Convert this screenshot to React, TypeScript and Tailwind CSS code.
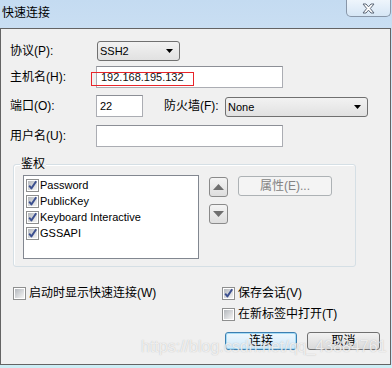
import React from "react";

const FONT = "font-['Liberation_Sans','Noto_Sans_CJK_SC',sans-serif]";

function Check({ checked }: { checked: boolean }) {
  return (
    <svg width="13" height="13" viewBox="0 0 13 13" className="shrink-0">
      <defs>
        <linearGradient id="cbg" x1="0" y1="0" x2="1" y2="1">
          <stop offset="0" stopColor="#b4b8bd" />
          <stop offset="1" stopColor="#f5f5f5" />
        </linearGradient>
      </defs>
      <rect x="0.5" y="0.5" width="12" height="12" fill="#ffffff" stroke="#8e8f8f" />
      <rect x="2" y="2" width="9" height="9" fill="url(#cbg)" />
      {checked && (
        <path d="M3.2 6.6 L5.4 9.4 L10.2 2.2" fill="none" stroke="#3b4f8f" strokeWidth="1.9" strokeLinejoin="round" />
      )}
    </svg>
  );
}

function Combo({ value, w }: { value: string; w: string }) {
  return (
    <div
      className={`${w} h-[20px] border border-[#707070] rounded-[3px] bg-gradient-to-b from-[#f2f2f2] to-[#e1e1e1] flex items-center pl-[2px] pr-[6px] justify-between`}
    >
      <span className="text-[11px] text-black leading-none">{value}</span>
      <svg width="7" height="4" viewBox="0 0 7 4">
        <path d="M0 0 L7 0 L3.5 4 Z" fill="#000" />
      </svg>
    </div>
  );
}

function Input({ w, children }: { w: string; children?: React.ReactNode }) {
  return (
    <div
      className={`${w} h-[22px] border border-[#abadb3] border-t-[#8c8f96] bg-white flex items-center pl-[3px] relative`}
    >
      {children}
    </div>
  );
}

export default function App() {
  return (
    <div
      className={`${FONT} w-[392px] h-[368px] overflow-hidden relative bg-gradient-to-b from-[#c4dbf1] via-[#e6f1fb] to-[#cfe3f5] text-black`}
    >
      {/* title bar */}
      <div className="h-[28px] flex justify-between items-start">
        <div className="pl-[2px] pt-[6px] text-[12px] leading-[14px] text-black">快速连接</div>
        <div className="mr-[1px] w-[45px] h-[17px] border border-t-0 border-[#8896a8] rounded-b-[5px] bg-gradient-to-b from-[#eef5fc] to-[#d6e6f5] flex items-center justify-center">
          <svg width="15" height="11" viewBox="0 0 15 11">
            <path
              d="M2 1 L5 1 L7.5 3.8 L10 1 L13 1 L9.3 5.5 L13 10 L10 10 L7.5 7.2 L5 10 L2 10 L5.7 5.5 Z"
              fill="#ffffff"
              stroke="#5b6676"
              strokeWidth="1"
              strokeLinejoin="round"
            />
          </svg>
        </div>
      </div>

      {/* body */}
      <div className="w-[391px] h-[337px] border border-[#646464] bg-[#f0f0f0] pl-[9px] flex flex-col text-[12px] leading-[16px]">
        {/* protocol */}
        <div className="mt-[12px] h-[20px] flex items-center">
          <span className="w-[87px]">协议(P):</span>
          <Combo value="SSH2" w="w-[83px]" />
        </div>
        {/* host */}
        <div className="mt-[5px] h-[22px] flex items-center">
          <span className="w-[86px]">主机名(H):</span>
          <Input w="w-[187px]">
            <span className="text-[11px] leading-none pl-[1px] text-[#111]">192.168.195.132</span>
            <div className="absolute left-[-6px] top-[5px] w-[103px] h-[14px] border border-[#e8242a]" />
          </Input>
        </div>
        {/* port */}
        <div className="mt-[7px] h-[22px] flex items-center">
          <span className="w-[86px]">端口(O):</span>
          <Input w="w-[47px]">
            <span className="text-[11px] leading-none">22</span>
          </Input>
          <span className="ml-[21px] w-[61px]">防火墙(F):</span>
          <div className="self-end">
            <Combo value="None" w="w-[143px]" />
          </div>
        </div>
        {/* user */}
        <div className="mt-[8px] h-[22px] flex items-center">
          <span className="w-[86px]">用户名(U):</span>
          <Input w="w-[187px]" />
        </div>

        {/* auth group */}
        <div className="mt-[17px] ml-[3px] w-[343px] h-[103px] border border-[#d5dfe5] rounded-[3px] shadow-[inset_1px_1px_0_#ffffff] relative pl-[9px] pt-[10px] flex items-start">
          <span className="absolute left-[6px] top-[-9px] px-[1px] bg-[#f0f0f0] text-[12px] leading-[16px]">鉴权</span>
          <div className="w-[176px] h-[84px] border border-[#828790] bg-white pl-[2px] pt-[1px] flex flex-col">
            {["Password", "PublicKey", "Keyboard Interactive", "GSSAPI"].map((t) => (
              <div key={t} className="h-[16px] flex items-center gap-[1px]">
                <Check checked />
                <span className="text-[11px] leading-none text-black">{t}</span>
              </div>
            ))}
          </div>
          <div className="ml-[10px] mt-[2px] flex flex-col gap-[7px]">
            <div className="w-[19px] h-[20px] border border-[#8a8a8a] rounded-[3px] bg-gradient-to-b from-[#f4f4f4] to-[#dedede] flex items-center justify-center">
              <svg width="11" height="6" viewBox="0 0 11 6">
                <path d="M5.5 0 L11 6 L0 6 Z" fill="#6f6f6f" />
              </svg>
            </div>
            <div className="w-[19px] h-[20px] border border-[#8a8a8a] rounded-[3px] bg-gradient-to-b from-[#f4f4f4] to-[#dedede] flex items-center justify-center">
              <svg width="11" height="6" viewBox="0 0 11 6">
                <path d="M0 0 L11 0 L5.5 6 Z" fill="#6f6f6f" />
              </svg>
            </div>
          </div>
          <div className="ml-[10px] mt-[1px] w-[94px] h-[20px] border border-[#adb2b5] rounded-[3px] bg-[#f4f4f4] flex items-center justify-center text-[#838383] text-[12px]">
            属性(E)...
          </div>
        </div>

        {/* options */}
        <div className="mt-[18px] h-[16px] flex items-center">
          <div className="w-[209px] flex items-center gap-[3px] ml-[3px]">
            <Check checked={false} />
            <span>启动时显示快速连接(W)</span>
          </div>
          <div className="flex items-center gap-[3px]">
            <Check checked />
            <span>保存会话(V)</span>
          </div>
        </div>
        <div className="mt-[5px] h-[16px] flex items-center">
          <div className="ml-[212px] flex items-center gap-[3px]">
            <Check checked={false} />
            <span>在新标签中打开(T)</span>
          </div>
        </div>
        <div className="mt-[10px] flex items-center ml-[215px] gap-[10px]">
          <div className="w-[72px] h-[18px] border border-[#3c7fb1] rounded-[3px] bg-gradient-to-b from-[#eef7fd] to-[#cfe8f8] shadow-[inset_0_0_0_1px_#a6dcf6] flex items-center justify-center text-[12px]">
            连接
          </div>
          <div className="w-[73px] h-[18px] border border-[#707070] rounded-[3px] bg-gradient-to-b from-[#f2f2f2] to-[#dadada] flex items-center justify-center text-[12px]">
            取消
          </div>
        </div>
      </div>
      <div className="h-[3px] bg-[#cdeef5]" />

      {/* watermark */}
      <div className="absolute left-[141px] top-[337px] text-[16px] leading-[19px] text-white/75 [text-shadow:0_0_1px_rgba(140,140,140,0.6)] font-['Liberation_Sans',sans-serif] pointer-events-none whitespace-nowrap">
        https://blog.csdn.net/qq_43884761
      </div>
    </div>
  );
}
